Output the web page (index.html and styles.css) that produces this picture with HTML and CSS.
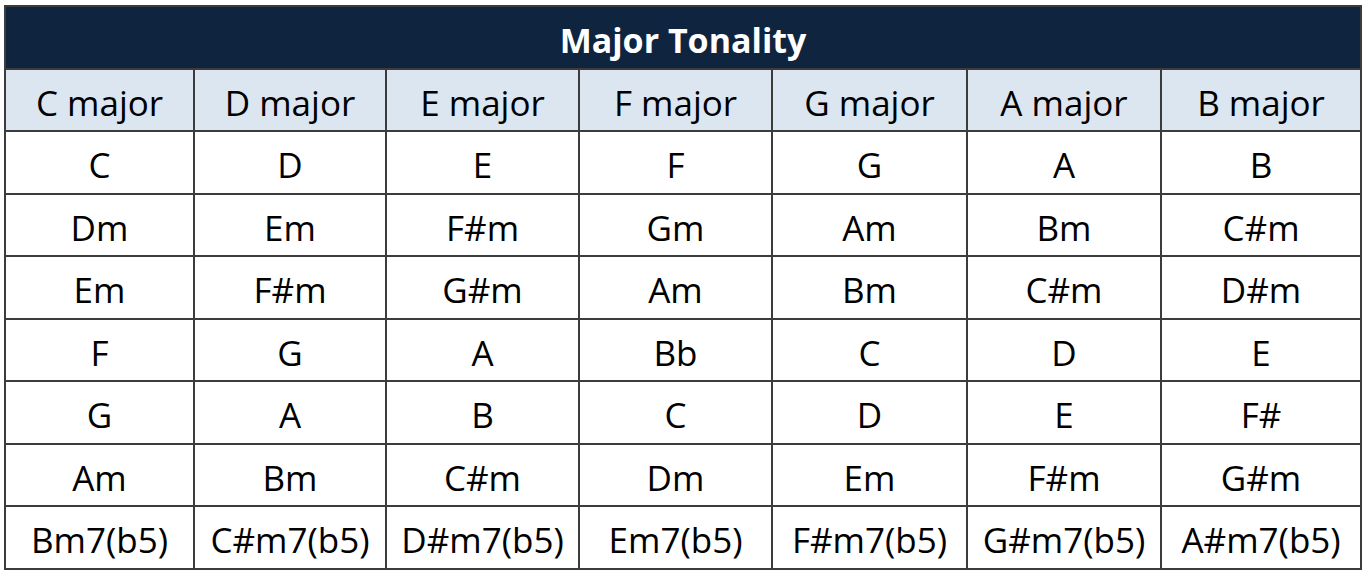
FILE: index.html
```html
<!DOCTYPE html>
<html>
<head>
<meta charset="utf-8">
<link rel="stylesheet" href="styles.css">
</head>
<body>
<table class="chords">
  <colgroup>
    <col class="c1"><col class="c2"><col class="c3"><col class="c4"><col class="c5"><col class="c6"><col class="c7">
  </colgroup>
  <tr class="title-row"><th colspan="7" class="title">Major Tonality</th></tr>
  <tr class="head-row">
    <th>C major</th><th>D major</th><th>E major</th><th>F major</th><th>G major</th><th>A major</th><th>B major</th>
  </tr>
  <tr><td>C</td><td>D</td><td>E</td><td>F</td><td>G</td><td>A</td><td>B</td></tr>
  <tr><td>Dm</td><td>Em</td><td>F#m</td><td>Gm</td><td>Am</td><td>Bm</td><td>C#m</td></tr>
  <tr><td>Em</td><td>F#m</td><td>G#m</td><td>Am</td><td>Bm</td><td>C#m</td><td>D#m</td></tr>
  <tr><td>F</td><td>G</td><td>A</td><td>Bb</td><td>C</td><td>D</td><td>E</td></tr>
  <tr><td>G</td><td>A</td><td>B</td><td>C</td><td>D</td><td>E</td><td>F#</td></tr>
  <tr><td>Am</td><td>Bm</td><td>C#m</td><td>Dm</td><td>Em</td><td>F#m</td><td>G#m</td></tr>
  <tr><td>Bm7(b5)</td><td>C#m7(b5)</td><td>D#m7(b5)</td><td>Em7(b5)</td><td>F#m7(b5)</td><td>G#m7(b5)</td><td>A#m7(b5)</td></tr>
</table>
</body>
</html>
```
FILE: styles.css
```css
html, body {
  margin: 0;
  padding: 0;
  background: #ffffff;
}
body {
  padding: 5px 0 0 4px;
  font-family: "Open Sans", "Noto Sans", sans-serif;
}
.chords {
  border-collapse: collapse;
  table-layout: fixed;
  width: 1356px;
  border: 2px solid #1a1a1a;
}
.c1 { width: 189px; }
.c2 { width: 192px; }
.c3 { width: 193px; }
.c4 { width: 193px; }
.c5 { width: 195px; }
.c6 { width: 194px; }
.c7 { width: 200px; }
.chords th, .chords td {
  border: 2px solid #3c3c3c;
  text-align: center;
  vertical-align: middle;
  padding: 5px 0 0;
  font-size: 35px;
  font-weight: 400;
  color: #000;
  line-height: 1;
}
.title-row { height: 63px; }
.title {
  background: #0f243e;
  color: #ffffff !important;
  font-weight: 700 !important;
  font-size: 34px !important;
}
.head-row { height: 63px; }
.head-row th { background: #dce6f1; }
.chords tr { height: 62.5px; }
```
